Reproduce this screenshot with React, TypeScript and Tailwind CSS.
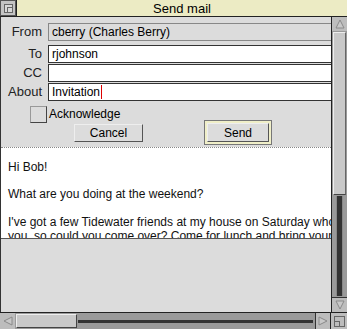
import React from "react";

const font = { fontFamily: '"Liberation Sans", Arial, sans-serif' };

const Field: React.FC<{ label: string; value?: string; readOnly?: boolean; caret?: boolean }> = ({
  label,
  value,
  readOnly,
  caret,
}) => (
  <div className="flex items-center h-[18px]">
    <div className="w-[43px] text-right pr-[2px] text-[13px] text-[#222]">{label}</div>
    <div
      className={`ml-[4px] flex-1 h-[18px] border border-[#333] border-r-0 flex items-center pl-[3px] text-[12px] text-black ${
        readOnly ? "bg-[#dcdcdc] border-[#888]" : "bg-white"
      }`}
    >
      {value}
      {caret && <span className="inline-block w-[1px] h-[14px] bg-[#d00] ml-[1px]" />}
    </div>
  </div>
);

const Arrow: React.FC<{ dir: "up" | "down" | "left" | "right" }> = ({ dir }) => {
  const pts = {
    up: "3,11 7,3 11,11",
    down: "3,3 7,11 11,3",
    left: "11,3 3,7 11,11",
    right: "3,3 11,7 3,11",
  }[dir];
  return (
    <svg width="14" height="14" viewBox="0 0 14 14">
      <polygon points={pts} fill="#c8c8c8" stroke="#8a8a8a" strokeWidth="1" />
    </svg>
  );
};

export default function App() {
  return (
    <div className="w-[347px] h-[329px] flex flex-col bg-[#dcdcdc] overflow-hidden" style={font}>
      {/* title bar */}
      <div className="h-[17px] flex border-b border-[#222] bg-[#222]">
        <div className="w-[16px] h-[16px] bg-[#c4c4c4] border border-[#555] flex items-center justify-center">
          <div className="w-[9px] h-[9px] border border-[#666] bg-[#d8d8d8] relative">
            <div className="absolute left-[2px] top-[2px] w-[6px] h-[6px] border border-[#666]" />
          </div>
        </div>
        <div className="flex-1 ml-[1px] bg-[#ecebc4] flex items-center justify-center text-[13px] text-black leading-none">
          Send mail
        </div>
      </div>

      {/* middle */}
      <div className="flex flex-1 min-h-0">
        <div className="w-[331px] flex flex-col border-l border-[#333]">
          {/* form */}
          <div className="pt-[6px] flex flex-col gap-[1px]">
            <div className="mb-[3px]">
              <Field label="From" value="cberry (Charles Berry)" readOnly />
            </div>
            <Field label="To" value="rjohnson" />
            <Field label="CC" />
            <Field label="About" value="Invitation" caret />
          </div>
          <div className="flex items-center mt-[4px] ml-[29px] h-[18px]">
            <div className="w-[17px] h-[17px] border border-[#999] border-r-[#444] border-b-[#444] bg-[#dcdcdc]" />
            <span className="ml-[2px] text-[12px] text-black">Acknowledge</span>
          </div>
          <div className="flex items-start h-[24px]">
            <div className="ml-[73px] mt-[1px] w-[69px] h-[18px] bg-[#dcdcdc] border border-[#eee] border-r-[#555] border-b-[#555] flex items-center justify-center text-[12px] text-black">
              Cancel
            </div>
            <div className="ml-[62px] -mt-[2px] w-[66px] h-[23px] border-2 border-[#f0efc8] outline outline-1 outline-[#777] flex items-center justify-center">
              <div className="w-full h-full bg-[#dcdcdc] border border-[#eee] border-r-[#555] border-b-[#555] flex items-center justify-center text-[12px] text-black">
                Send
              </div>
            </div>
          </div>

          {/* message body */}
          <div className="h-[91px] bg-white border-t border-[#888] border-dotted overflow-hidden pl-[7px] pt-[12px] text-[12px] leading-[14px] text-[#111] whitespace-nowrap">
            <p>Hi Bob!</p>
            <p className="mt-[13px]">What are you doing at the weekend?</p>
            <p className="mt-[14px]">I've got a few Tidewater friends at my house on Saturday who</p>
            <p>you, so could you come over? Come for lunch and bring your</p>
          </div>
          <div className="flex-1 bg-[#dcdcdc] border-t border-[#555]" />
        </div>

        {/* vertical scrollbar */}
        <div className="w-[16px] flex flex-col bg-[#333] border-l border-[#222]">
          <div className="h-[14px] bg-[#bdbdbd] flex items-center justify-center">
            <Arrow dir="up" />
          </div>
          <div className="flex-1 bg-[#9a9a9a] p-[1px] flex flex-col">
            <div className="h-[163px] bg-[#c9c9c9] border border-[#eee] border-r-[#666] border-b-[#444]" />
            <div className="flex-1 mx-[3px] mt-[1px] bg-[#333] border-x border-[#888]" />
          </div>
          <div className="h-[15px] bg-[#bdbdbd] border-t border-[#333] flex items-center justify-center">
            <Arrow dir="down" />
          </div>
        </div>
      </div>

      {/* bottom scrollbar */}
      <div className="h-[17px] flex border-t border-[#222] bg-[#333]">
        <div className="w-[15px] bg-[#bdbdbd] flex items-center justify-center">
          <Arrow dir="left" />
        </div>
        <div className="w-[300px] bg-[#9a9a9a] p-[1px] flex items-center">
          <div className="w-[61px] h-full bg-[#c9c9c9] border border-[#eee] border-r-[#444] border-b-[#444]" />
          <div className="flex-1 h-[3px] my-auto mx-[1px] bg-[#333]" />
        </div>
        <div className="w-[15px] bg-[#bdbdbd] border-l border-[#333] flex items-center justify-center">
          <Arrow dir="right" />
        </div>
        <div className="flex-1 bg-[#bdbdbd] border-l border-[#222] flex items-center justify-center">
          <div className="w-[11px] h-[11px] border border-[#666] relative">
            <div className="absolute left-[-1px] bottom-[-1px] w-[6px] h-[6px] border border-[#666]" />
          </div>
        </div>
      </div>
    </div>
  );
}
